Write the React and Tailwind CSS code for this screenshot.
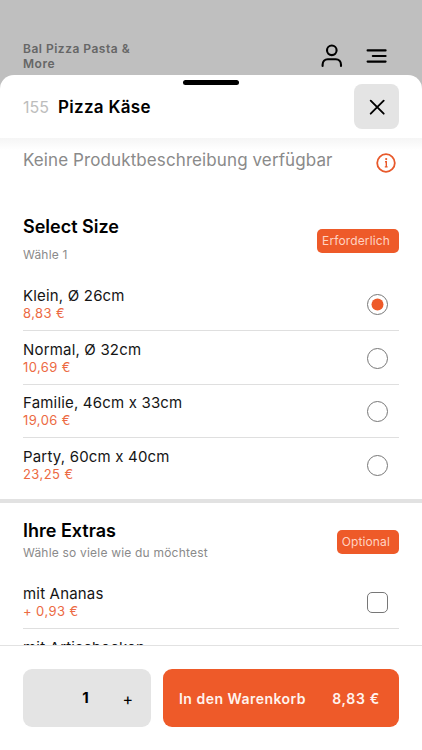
import React, { useState } from 'react';

const SIZES = [
  { name: 'Klein, Ø 26cm', price: '8,83 €' },
  { name: 'Normal, Ø 32cm', price: '10,69 €' },
  { name: 'Familie, 46cm x 33cm', price: '19,06 €' },
  { name: 'Party, 60cm x 40cm', price: '23,25 €' },
];

const EXTRAS = [
  { name: 'mit Ananas', price: '+ 0,93 €' },
  { name: 'mit Artischocken', price: '+ 0,93 €' },
];

const UserIcon = () => (
  <svg width="24" height="26" viewBox="0 0 24 26" fill="none" stroke="#000" strokeWidth="2.1" strokeLinecap="round">
    <circle cx="11.8" cy="7.3" r="4.8" />
    <path d="M2.6 23v-1.2c0-3.3 2.2-5.6 5.2-5.6h8c3 0 5.2 2.3 5.2 5.6V23" />
  </svg>
);

const MenuIcon = () => (
  <svg width="22" height="16" viewBox="0 0 22 16" fill="none" stroke="#000" strokeWidth="2.1" strokeLinecap="round">
    <path d="M1.6 2.4h18M6.8 8h12.8M1.6 13.6h18" />
  </svg>
);

const CloseIcon = () => (
  <svg width="18" height="18" viewBox="0 0 18 18" fill="none" stroke="#000" strokeWidth="1.9" strokeLinecap="round">
    <path d="M2.7 2.7l13 13M15.7 2.7l-13 13" />
  </svg>
);

const InfoIcon = () => (
  <svg width="20" height="20" viewBox="0 0 20 20" fill="none" stroke="#e8592b">
    <circle cx="10" cy="10" r="8.8" strokeWidth="1.8" />
    <path d="M9 8.8h1.3v5M8.8 13.9h2.8" strokeWidth="1.4" />
    <circle cx="10.2" cy="6.1" r="1.1" fill="#e8592b" stroke="none" />
  </svg>
);

// --- Section title with the orange badge on the right ---
const SectionHead = ({ title, hint, badge, gap }) => (
  <div className="flex items-end justify-between">
    <div className={`flex flex-col ${gap}`}>
      <h2 className="text-[18px] leading-6 font-semibold text-black">{title}</h2>
      <p className="text-[12px] leading-4 tracking-[0.2px] text-[#8a8a8a]">{hint}</p>
    </div>
    <span className={`flex h-6 items-center rounded-[5px] bg-[#ee5a29] pr-[9px] pl-[5px] text-[12px] tracking-[0.13px] text-[#ffd3c3] ${badge === 'Optional' ? 'mb-[7px]' : 'mb-[10px]'}`}>
      {badge}
    </span>
  </div>
);

const OptionRow = ({ name, price, children, last }) => (
  <div className={`flex h-[53.4px] items-center justify-between pr-[11px] ${last ? '' : 'border-b border-[#dfdfdf]'}`}>
    <div className="pt-px">
      <div className="text-[15px] leading-[18px] tracking-[0.18px] text-[#151515]">{name}</div>
      <div className="text-[13px] leading-[17px] tracking-[0.42px] text-[#ec6a43]">{price}</div>
    </div>
    {children}
  </div>
);

export default function App() {
  const [selected, setSelected] = useState(0);
  const [count, setCount] = useState(1);

  return (
    <div className="flex h-[750px] w-[422px] flex-col overflow-hidden bg-[#bfbfbf] font-['Inter',sans-serif]">
      {/* Dimmed page behind the sheet */}
      <div className="flex h-[75px] shrink-0 items-start justify-between pr-[34px] pl-[23px]">
        <p className="w-[120px] pt-[41px] text-[12px] leading-[15px] font-semibold tracking-[0.5px] text-[#666]">
          Bal Pizza Pasta &amp; More
        </p>
        <div className="flex items-center gap-[22px] pt-[43px]">
          <UserIcon />
          <MenuIcon />
        </div>
      </div>

      <div className="relative flex min-h-0 flex-1 flex-col overflow-hidden rounded-t-[14px] bg-white">
        <div className="absolute top-[4.5px] left-[183px] h-[5.5px] w-14 rounded-full bg-black" />

        <header className="flex h-[63px] shrink-0 items-center justify-between px-[23px]">
          <div className="flex items-center gap-[9px] pt-px">
            <span className="text-[16px] leading-6 text-[#bdbdbd]">155</span>
            <h1 className="text-[17px] leading-6 font-semibold tracking-[0.3px] text-black">Pizza Käse</h1>
          </div>
          <button className="flex size-[45px] items-center justify-center rounded-[8px] bg-[#e4e4e4]">
            <CloseIcon />
          </button>
        </header>

        <main className="min-h-0 flex-1 overflow-hidden">
          <div className="h-3 bg-linear-to-b from-[#f5f5f5] to-white" />
          <div className="px-[23px]">
            <div className="flex h-[65px] items-start justify-between pr-[3px]">
              <p className="text-[17px] leading-5 tracking-[0.1px] text-[#8a8a8a]">Keine Produktbeschreibung verfügbar</p>
              <div className="pt-[3px]">
                <InfoIcon />
              </div>
            </div>

            <SectionHead title="Select Size" hint="Wähle 1" badge="Erforderlich" gap="gap-2" />

            <div className="pt-[15px]">
              {SIZES.map((size, i) => (
                <OptionRow key={size.name} name={size.name} price={size.price} last={i === SIZES.length - 1}>
                  <button
                    onClick={() => setSelected(i)}
                    className="mt-px flex size-[21px] items-center justify-center rounded-full border border-[#777]"
                  >
                    {selected === i && <span className="size-[11px] scale-[1.09] rounded-full bg-[#ee5a29]" />}
                  </button>
                </OptionRow>
              ))}
            </div>
          </div>

          <div className="mt-[7px] h-1 bg-[#e2e2e2]" />

          <div className="px-[23px] pt-4">
            <SectionHead title="Ihre Extras" hint="Wähle so viele wie du möchtest" badge="Optional" gap="gap-0.5" />
            <div className="pt-[15.4px]">
              {EXTRAS.map((extra) => (
                <OptionRow key={extra.name} name={extra.name} price={extra.price}>
                  <span className="mt-px size-[21px] rounded-[5px] border border-[#777]" />
                </OptionRow>
              ))}
            </div>
          </div>
        </main>

        <footer className="flex h-[105px] shrink-0 items-start gap-3 border-t border-[#e2e2e2] bg-white px-[23px] pt-[23px]">
          <div className="flex h-[58px] w-32 items-center justify-end rounded-[9px] bg-[#e4e4e4] pr-[18px]">
            <span className="w-5 text-center text-[15px] font-bold">{count}</span>
            <button onClick={() => setCount(count + 1)} className="ml-[27px] pt-px text-[16px]">
              +
            </button>
          </div>
          <button className="flex h-[58px] flex-1 items-center justify-between rounded-[9px] bg-[#ee5a29] pt-px pr-[19px] pl-4 text-[14px] font-semibold tracking-[0.48px] text-[#fff3ee]">
            <span>In den Warenkorb</span>
            <span className="tracking-[0.7px]">8,83 €</span>
          </button>
        </footer>
      </div>
    </div>
  );
}
